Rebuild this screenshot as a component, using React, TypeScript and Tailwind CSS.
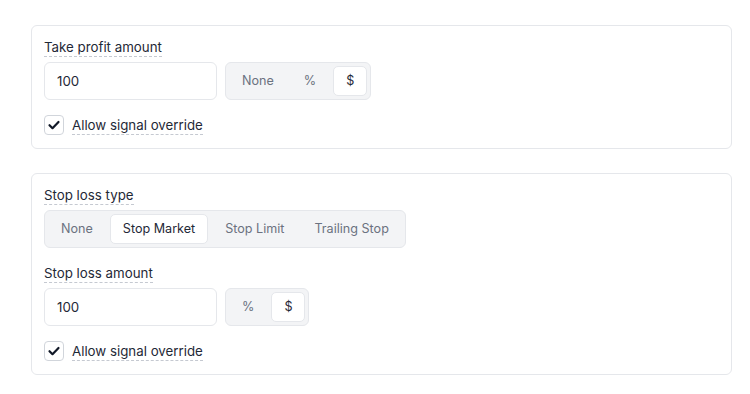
function Label({ children }: { children: React.ReactNode }) {
  return (
    <div className="flex">
      <span className="border-b border-dashed border-[#c5c9d1] text-[13.3px] leading-[18px] text-[#1f2937]">{children}</span>
    </div>
  );
}

function Segmented({ options, value }: { options: string[]; value: string }) {
  return (
    <div className="flex h-[38px] items-center gap-1 rounded-md border border-[#e5e7eb] bg-[#f3f4f6] px-[3px]">
      {options.map((o) => (
        <button
          key={o}
          className={
            o === value
              ? "h-[30px] rounded-[5px] border border-[#e5e7eb] bg-white px-3 pt-px text-[12.6px] text-[#1f2937]"
              : "h-[30px] rounded-[5px] border border-transparent px-3 pt-px text-[12.6px] text-[#6b7280]"
          }
        >
          {o}
        </button>
      ))}
    </div>
  );
}

function AmountRow({ options }: { options: string[] }) {
  return (
    <div className="flex items-center gap-2">
      <input
        defaultValue="100"
        className="h-[38px] w-[173px] rounded-md border border-[#e5e7eb] bg-white px-3 text-[13.3px] text-[#1f2937] outline-none"
      />
      <Segmented options={options} value="$" />
    </div>
  );
}

function Override() {
  return (
    <label className="flex items-center gap-2">
      <span className="flex h-5 w-5 items-center justify-center rounded-[4px] border border-[#d1d5db] bg-white">
        <svg width="14" height="14" viewBox="0 0 14 14" fill="none">
          <path d="M2.5 7.2l3 3L11.5 4" stroke="#111827" strokeWidth="2.2" strokeLinecap="round" strokeLinejoin="round" />
        </svg>
      </span>
      <span className="border-b border-dashed border-[#c5c9d1] text-[13.3px] leading-[18px] text-[#1f2937]">Allow signal override</span>
    </label>
  );
}

export default function App() {
  return (
    <div className="flex flex-col gap-6 bg-white px-[31px] pt-[25px]" style={{ fontFamily: "Inter, 'Noto Sans', sans-serif" }}>
      <div className="flex w-[701px] flex-col rounded-md border border-[#e5e7eb] px-3 pt-3 pb-[13px]">
        <Label>Take profit amount</Label>
        <div className="mt-[5px]">
          <AmountRow options={["None", "%", "$"]} />
        </div>
        <div className="mt-[15px]">
          <Override />
        </div>
      </div>

      <div className="flex w-[701px] flex-col rounded-md border border-[#e5e7eb] px-3 pt-3 pb-[13px]">
        <Label>Stop loss type</Label>
        <div className="mt-[5px] flex">
          <Segmented options={["None", "Stop Market", "Stop Limit", "Trailing Stop"]} value="Stop Market" />
        </div>
        <div className="mt-[16px]">
          <Label>Stop loss amount</Label>
        </div>
        <div className="mt-[5px]">
          <AmountRow options={["%", "$"]} />
        </div>
        <div className="mt-[15px]">
          <Override />
        </div>
      </div>
    </div>
  );
}
